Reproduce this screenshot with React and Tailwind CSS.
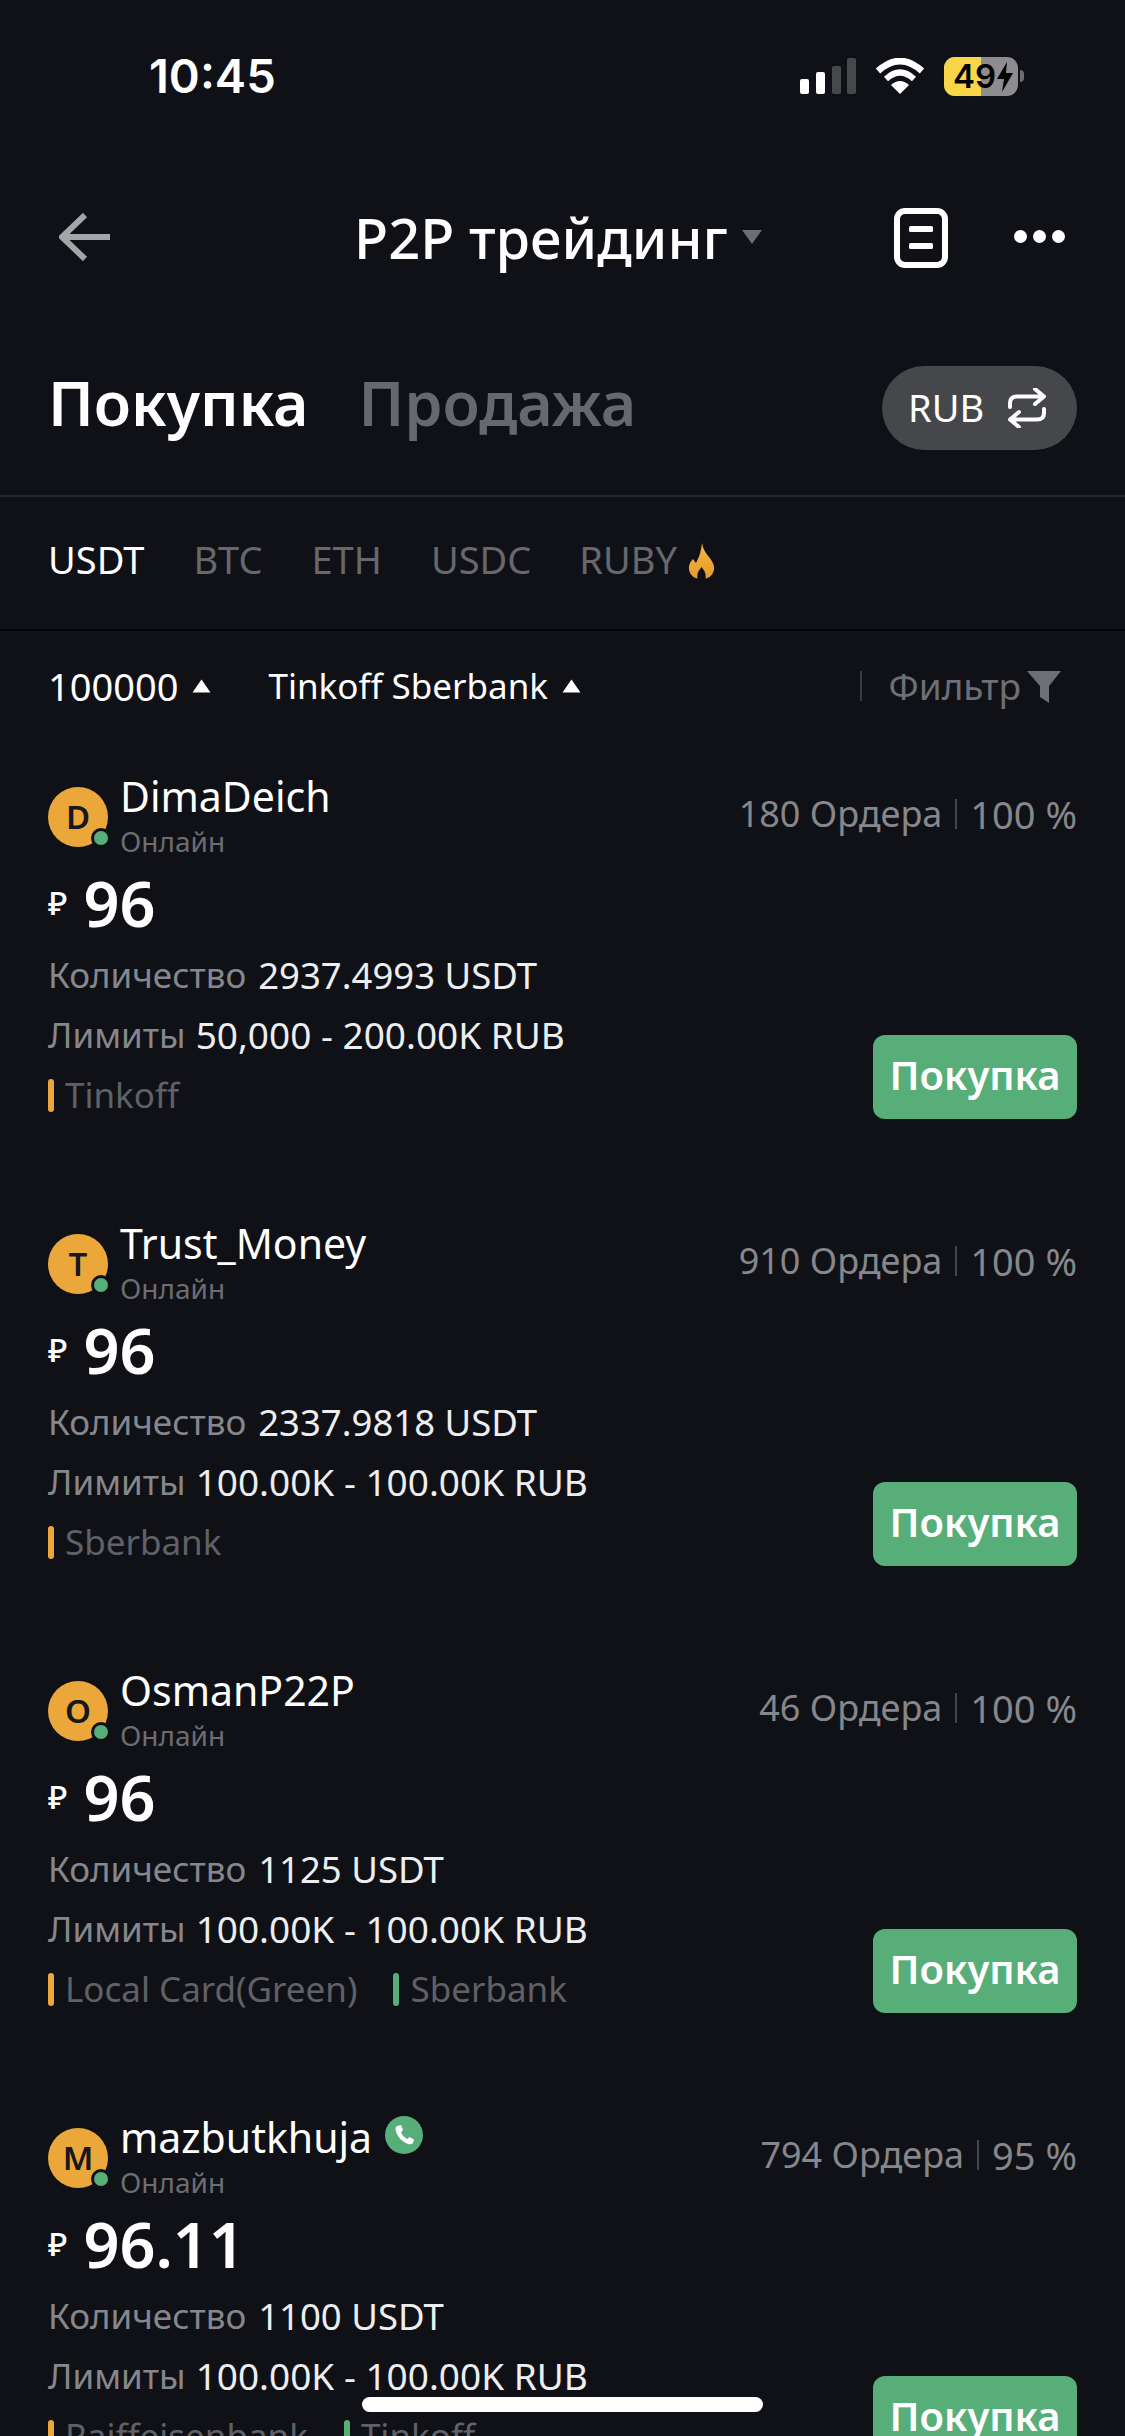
const OFFERS = [
  {
    letter: "D",
    name: "DimaDeich",
    orders: "180 Ордера",
    rate: "100 %",
    price: "96",
    amount: "2937.4993 USDT",
    limits: "50,000 - 200.00K RUB",
    methods: [{ label: "Tinkoff", color: "bg-[#eca73b]" }],
  },
  {
    letter: "T",
    name: "Trust_Money",
    orders: "910 Ордера",
    rate: "100 %",
    price: "96",
    amount: "2337.9818 USDT",
    limits: "100.00K - 100.00K RUB",
    methods: [{ label: "Sberbank", color: "bg-[#eca73b]" }],
  },
  {
    letter: "O",
    name: "OsmanP22P",
    orders: "46 Ордера",
    rate: "100 %",
    price: "96",
    amount: "1125 USDT",
    limits: "100.00K - 100.00K RUB",
    methods: [
      { label: "Local Card(Green)", color: "bg-[#eca73b]" },
      { label: "Sberbank", color: "bg-[#58ae78]" },
    ],
  },
  {
    letter: "M",
    name: "mazbutkhuja",
    verified: true,
    orders: "794 Ордера",
    rate: "95 %",
    price: "96.11",
    amount: "1100 USDT",
    limits: "100.00K - 100.00K RUB",
    methods: [
      { label: "Raiffeisenbank", color: "bg-[#eca73b]" },
      { label: "Tinkoff", color: "bg-[#58ae78]" },
    ],
  },
];

const StatusIcons = () => (
  <div className="flex items-center">
    <svg width="56" height="36" viewBox="0 0 56 36" className="mr-[19px]">
      <rect x="0" y="21" width="9" height="15" rx="2" fill="#fff" />
      <rect x="16" y="14" width="9" height="22" rx="2" fill="#fff" />
      <rect x="32" y="8" width="9" height="28" rx="2" fill="#47484b" />
      <rect x="47" y="0" width="9" height="36" rx="2" fill="#47484b" />
    </svg>
    <svg width="50" height="36" viewBox="0 0 50 36" className="mr-[19px]">
      <path d="M3 13 Q25 -7 47 13" fill="none" stroke="#fff" strokeWidth="6.5" />
      <path d="M11 21 Q25 8 39 21" fill="none" stroke="#fff" strokeWidth="6" />
      <path d="M16 27 Q25 19 34 27 L25 36 Z" fill="#fff" />
    </svg>
    <div className="relative flex h-[39px] w-[74px] rounded-[11px] bg-[#8d8d8f]">
      <div className="h-full w-[37px] rounded-l-[11px] bg-[#f8d648]" />
      <span className="absolute left-[9px] top-0 font-['Inter',sans-serif] text-[33px] leading-[39px] font-semibold text-black">
        49
      </span>
      <svg width="16" height="30" viewBox="0 0 16 30" className="absolute left-[53px] top-[5px]">
        <path d="M10 0 L0 17 H7 L5 30 L16 11 H9 Z" fill="#000" />
      </svg>
    </div>
    <div className="ml-[2px] h-[12px] w-[4px] rounded-r-full bg-[#6f6f71]" />
  </div>
);

const Caret = ({ color = "#fff" }) => (
  <svg width="19" height="14" viewBox="0 0 19 14">
    <path d="M9.5 0.5 L18.5 13.5 H0.5 Z" fill={color} />
  </svg>
);

const OfferCard = ({ offer }) => (
  <div className="relative h-[447px] shrink-0 px-[48px] pt-[33px]">
    <div className="flex items-start justify-between">
      <div className="flex">
        <div className="relative mt-[13px] flex h-[60px] w-[60px] items-center justify-center rounded-full bg-[#eca73b] text-[33px] font-semibold text-[#17181b]">
          {offer.letter}
          <div className="absolute bottom-[-1px] right-[-3px] h-[20px] w-[20px] rounded-full border-[3px] border-[#101116] bg-[#58ae78]" />
        </div>
        <div className="ml-[12px]">
          <div className="flex h-[44px] items-center text-[41px] leading-[44px] text-white">
            {offer.name}
            {offer.verified && (
              <svg width="38" height="38" viewBox="0 0 38 38" className="ml-[13px] mb-[4px]">
                <circle cx="19" cy="19" r="19" fill="#58ae78" />
                <path
                  d="M12 10 L16 9 L18 14 L16 16.5 Q18 21 22 23 L24.5 21 L29 23.5 L28 27 Q26 29 23 28 Q13 24 10.5 14 Q10 11.5 12 10 Z"
                  fill="#fff"
                />
              </svg>
            )}
          </div>
          <div className="mt-[5px] text-[28px] leading-[36px] text-[#6b6d72]">Онлайн</div>
        </div>
      </div>
      <div className="mt-[18px] flex items-center leading-[44px] text-[#85878c]">
        <span className="text-[36px]">{offer.orders}</span>
        <span className="mx-[13px] h-[30px] w-[2px] bg-[#45464a]" />
        <span className="text-[38px]">{offer.rate}</span>
      </div>
    </div>
    <div className="mt-[7px] flex h-[74px] items-center text-white">
      <span className="mr-[16px] text-[33px] font-medium">₽</span>
      <span className="text-[63px] leading-[74px] font-semibold">{offer.price}</span>
    </div>
    <div className="mt-[13px] flex h-[44px] items-center">
      <span className="mr-[12px] text-[35px] text-[#85878c]">Количество</span>
      <span className="text-[36.5px] text-[#eceef0]">{offer.amount}</span>
    </div>
    <div className="mt-[16px] flex h-[44px] items-center">
      <span className="mr-[10px] text-[35px] text-[#85878c]">Лимиты</span>
      <span className="text-[37px] text-[#eceef0]">{offer.limits}</span>
    </div>
    <div className="mt-[16px] flex h-[44px] items-center gap-[36px] text-[35px] text-[#5f6166]">
      {offer.methods.map((method) => (
        <div key={method.label} className="flex items-center">
          <span className={`mr-[11px] h-[33px] w-[6px] rounded-full ${method.color}`} />
          {method.label}
        </div>
      ))}
    </div>
    <button className="absolute right-[48px] top-[294px] flex h-[84px] w-[204px] items-center justify-center rounded-[12px] bg-[#58ae78] pb-[5px] text-[40px] font-semibold text-white">
      Покупка
    </button>
  </div>
);

export default function App() {
  return (
    <div className="relative flex h-[2436px] w-[1125px] flex-col overflow-hidden bg-[#101116] font-['Noto_Sans',sans-serif]">
      {/* Status bar */}
      <div className="flex h-[152px] shrink-0 items-center justify-between pl-[149px] pr-[101px]">
        <span className="font-['Inter',sans-serif] text-[47px] font-semibold text-white">10:45</span>
        <StatusIcons />
      </div>

      {/* Nav bar */}
      <div className="relative flex h-[170px] shrink-0 items-center pl-[354px]">
        <svg width="52" height="48" viewBox="0 0 52 48" className="absolute left-[59px] top-[61px]">
          <path d="M26 2 L3 24 L26 46 M3 24 H51" fill="none" stroke="#a4a5a8" strokeWidth="6" />
        </svg>
        <span className="text-[56px] font-medium text-white">P2P трейдинг</span>
        <svg width="20" height="14" viewBox="0 0 20 14" className="ml-[14px]">
          <path d="M0 0 H20 L10 14 Z" fill="#6d6e72" />
        </svg>
        <svg width="54" height="60" viewBox="0 0 54 60" className="absolute left-[894px] top-[56px]">
          <rect x="3" y="3" width="48" height="54" rx="8" fill="none" stroke="#fff" strokeWidth="6" />
          <rect x="15" y="18" width="24" height="6" rx="1.5" fill="#fff" />
          <rect x="15" y="35" width="24" height="6" rx="1.5" fill="#fff" />
        </svg>
        <div className="absolute left-[1014px] top-[78px] flex gap-[6px]">
          <span className="h-[13px] w-[13px] rounded-full bg-white" />
          <span className="h-[13px] w-[13px] rounded-full bg-white" />
          <span className="h-[13px] w-[13px] rounded-full bg-white" />
        </div>
      </div>

      {/* Buy / sell tabs */}
      <div className="flex h-[175px] shrink-0 items-center justify-between border-b-2 border-[#26272b] pl-[48px] pr-[48px]">
        <div className="mb-[12px] flex items-center gap-[50px] text-[61px] font-semibold">
          <span className="text-white">Покупка</span>
          <span className="text-[#66686d]">Продажа</span>
        </div>
        <div className="mb-[2px] flex h-[84px] w-[195px] items-center gap-[24px] rounded-full bg-[#45474a] pl-[26px]">
          <span className="text-[38px] text-white">RUB</span>
          <svg width="38" height="40" viewBox="0 0 38 40">
            <path
              d="M27 1 L36 8.5 L27 16 M35 8.5 H9 Q2 8.5 2 15 V19 M11 39 L2 31.5 L11 24 M3 31.5 H29 Q36 31.5 36 25 V21"
              fill="none"
              stroke="#fff"
              strokeWidth="4"
              strokeLinecap="round"
              strokeLinejoin="round"
            />
          </svg>
        </div>
      </div>

      {/* Coin tabs */}
      <div className="flex h-[134px] shrink-0 items-center border-b-2 border-[#050507] pb-[8px] pl-[48px] text-[38px] text-[#66686d]">
        <span className="mr-[49px] text-white">USDT</span>
        <span className="mr-[49px]">BTC</span>
        <span className="mr-[49px]">ETH</span>
        <span className="mr-[48px]">USDC</span>
        <span className="mr-[11px]">RUBY</span>
        <svg width="27" height="37" viewBox="0 0 27 37" className="mt-[4px]">
          <defs>
            <linearGradient id="flame" x1="0" y1="0" x2="0" y2="1">
              <stop offset="0" stopColor="#f5b63f" />
              <stop offset="1" stopColor="#e79a2e" />
            </linearGradient>
          </defs>
          <path
            d="M14 0 Q15 7 21 14 Q27 21 26 27 Q24 36 13.5 36 Q3 36 1 27 Q0 21 5 16 L8 20 Q13 11 14 0 Z"
            fill="url(#flame)"
          />
          <path d="M13.5 24 Q17 28 17.5 31 Q17.5 35 18 37 H9 Q9.5 35 9.5 31 Q10 28 13.5 24 Z" fill="#101116" />
        </svg>
      </div>

      {/* Filters */}
      <div className="flex h-[110px] shrink-0 items-center justify-between pl-[48px] pr-[64px] text-white">
        <div className="flex items-center">
          <span className="mr-[14px] text-[38px]">100000</span>
          <Caret />
          <span className="ml-[57px] mr-[14px] text-[35px]">Tinkoff Sberbank</span>
          <Caret />
        </div>
        <div className="flex items-center text-[37px] text-[#6d6f74]">
          <span className="mr-[26px] h-[30px] w-[2px] bg-[#3a3b3f]" />
          <span className="mr-[6px]">Фильтр</span>
          <svg width="34" height="32" viewBox="0 0 34 32" className="mt-[2px]">
            <path d="M0 0 H34 L22 15 V32 L13 26 V15 Z" fill="#6d6f74" />
          </svg>
        </div>
      </div>

      {/* Offers */}
      <div className="flex flex-col">
        {OFFERS.map((offer) => (
          <OfferCard key={offer.name} offer={offer} />
        ))}
      </div>

      {/* Home indicator */}
      <div className="absolute left-[362px] top-[2397px] h-[15px] w-[401px] rounded-full bg-white" />
    </div>
  );
}
